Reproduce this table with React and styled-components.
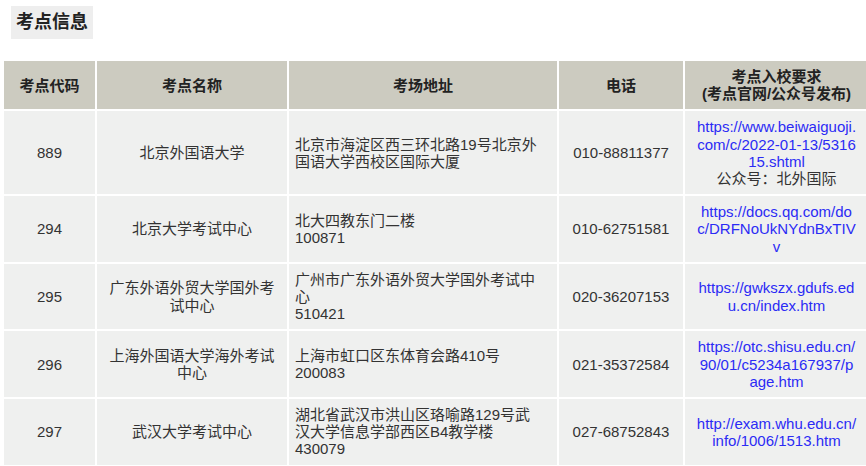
import React from 'react';
import styled, { createGlobalStyle } from 'styled-components';

const GlobalStyle = createGlobalStyle`
  * {
    box-sizing: border-box;
  }
  body {
    margin: 0;
    background: #ffffff;
    overflow: hidden;
    font-family: 'Liberation Sans', 'Noto Sans CJK SC', sans-serif;
    color: #333333;
  }
`;

const Page = styled.div`
  width: 866px;
  padding: 6px 0 0 2px;
`;

const Title = styled.h3`
  display: inline-block;
  margin: 0 0 20px 9px;
  padding: 0 5px;
  height: 33px;
  line-height: 33px;
  font-size: 18px;
  font-weight: bold;
  color: #222222;
  background: #eeeeee;
`;

const Table = styled.table`
  width: 866px;
  table-layout: fixed;
  border-collapse: separate;
  border-spacing: 2px;
  font-size: 15px;
  line-height: 17.2px;
`;

const Head = styled.th`
  width: ${(p) => p.$w}px;
  padding: 7px 4px;
  background: #cccbc0;
  color: #222222;
  font-weight: bold;
  text-align: center;
  vertical-align: middle;
`;

const Cell = styled.td`
  padding: ${(p) => (p.$left ? '7px 14px 7px 6px' : '7px 6px')};
  background: #eff0ef;
  text-align: ${(p) => (p.$left ? 'left' : 'center')};
  vertical-align: middle;
  color: #333333;
`;

const Line = styled.span`
  display: block;
`;

const Link = styled.a`
  color: #2b2bf5;
  text-decoration: none;
`;

const rows = [
  {
    code: '889',
    name: '北京外国语大学',
    address: ['北京市海淀区西三环北路19号北京外国语大学西校区国际大厦'],
    phone: '010-88811377',
    link: ['https://www.beiwaiguoji.', 'com/c/2022-01-13/5316', '15.shtml'],
    note: '公众号：北外国际',
  },
  {
    code: '294',
    name: '北京大学考试中心',
    address: ['北大四教东门二楼', '100871'],
    phone: '010-62751581',
    link: ['https://docs.qq.com/do', 'c/DRFNoUkNYdnBxTIV', 'v'],
  },
  {
    code: '295',
    name: '广东外语外贸大学国外考试中心',
    address: ['广州市广东外语外贸大学国外考试中心', '510421'],
    phone: '020-36207153',
    link: ['https://gwkszx.gdufs.ed', 'u.cn/index.htm'],
  },
  {
    code: '296',
    name: '上海外国语大学海外考试中心',
    address: ['上海市虹口区东体育会路410号', '200083'],
    phone: '021-35372584',
    link: ['https://otc.shisu.edu.cn/', '90/01/c5234a167937/p', 'age.htm'],
  },
  {
    code: '297',
    name: '武汉大学考试中心',
    address: ['湖北省武汉市洪山区珞喻路129号武汉大学信息学部西区B4教学楼', '430079'],
    phone: '027-68752843',
    link: ['http://exam.whu.edu.cn/', 'info/1006/1513.htm'],
  },
];

const App = () => {
  return (
    <Page>
      <GlobalStyle />
      <Title>考点信息</Title>
      <Table>
        <thead>
          <tr>
            <Head $w={91}>考点代码</Head>
            <Head $w={190}>考点名称</Head>
            <Head $w={268}>考场地址</Head>
            <Head $w={124}>电话</Head>
            <Head $w={183}>
              考点入校要求
              <br />
              (考点官网/公众号发布)
            </Head>
          </tr>
        </thead>
        <tbody>
          {rows.map((row) => (
            <tr key={row.code}>
              <Cell>{row.code}</Cell>
              <Cell>{row.name}</Cell>
              <Cell $left>
                {row.address.map((line) => (
                  <Line key={line}>{line}</Line>
                ))}
              </Cell>
              <Cell>{row.phone}</Cell>
              <Cell>
                <Link href="#">
                  {row.link.map((part) => (
                    <Line key={part}>{part}</Line>
                  ))}
                </Link>
                {row.note && <Line>{row.note}</Line>}
              </Cell>
            </tr>
          ))}
        </tbody>
      </Table>
    </Page>
  );
};

export default App;
